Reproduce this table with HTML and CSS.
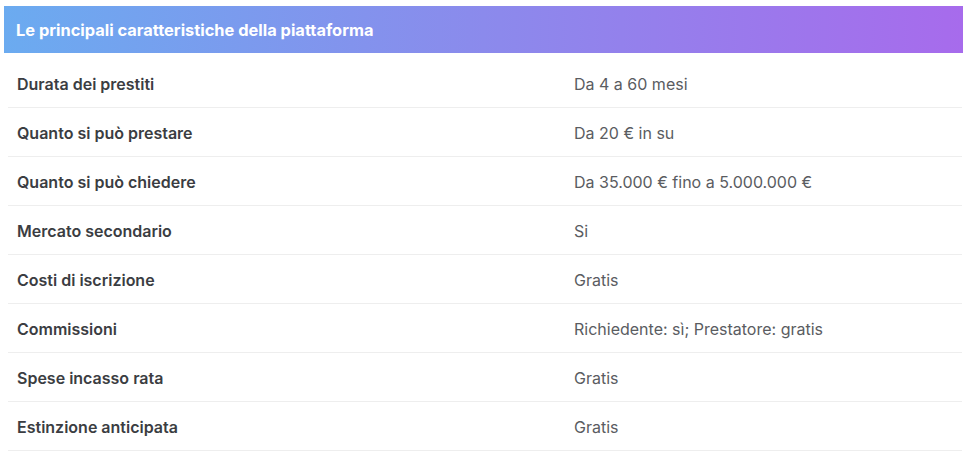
FILE: index.html
```html
<!DOCTYPE html>
<html lang="it">
<head>
<meta charset="utf-8">
<title>Caratteristiche</title>
<link rel="stylesheet" href="styles.css">
</head>
<body>
<div class="wrap">
  <div class="head">Le principali caratteristiche della piattaforma</div>
  <div class="rows">
    <div class="row"><div class="k">Durata dei prestiti</div><div class="v">Da 4 a 60 mesi</div></div>
    <div class="row"><div class="k">Quanto si può prestare</div><div class="v">Da 20 € in su</div></div>
    <div class="row"><div class="k">Quanto si può chiedere</div><div class="v">Da 35.000 € fino a 5.000.000 €</div></div>
    <div class="row"><div class="k">Mercato secondario</div><div class="v">Si</div></div>
    <div class="row"><div class="k">Costi di iscrizione</div><div class="v">Gratis</div></div>
    <div class="row"><div class="k">Commissioni</div><div class="v">Richiedente: sì; Prestatore: gratis</div></div>
    <div class="row"><div class="k">Spese incasso rata</div><div class="v">Gratis</div></div>
    <div class="row"><div class="k">Estinzione anticipata</div><div class="v">Gratis</div></div>
  </div>
</div>
</body>
</html>
```
FILE: styles.css
```css
html, body { margin: 0; padding: 0; background: #fff; }
body { font-family: Inter, "Liberation Sans", sans-serif; }
.wrap { padding: 6px 4px 0 4px; width: 959px; }
.head {
  height: 47px;
  display: flex;
  align-items: center;
  padding-left: 12px;
  color: #fff;
  font-weight: 700;
  font-size: 16.4px;
  background: linear-gradient(90deg, #6babf0 0%, #8b8aec 50%, #a76bec 100%);
}
.rows { margin: 6px 1px 0 4px; }
.row {
  box-sizing: border-box;
  display: grid;
  grid-template-columns: 557px 1fr;
  height: 49px;
  align-items: center;
  padding: 2px 9px 0 9px;
  border-bottom: 1px solid #eeeeee;
  font-size: 16px;
}
.k { font-weight: 600; color: #3b3d42; }
.v { font-weight: 400; color: #5a5c61; }
```
